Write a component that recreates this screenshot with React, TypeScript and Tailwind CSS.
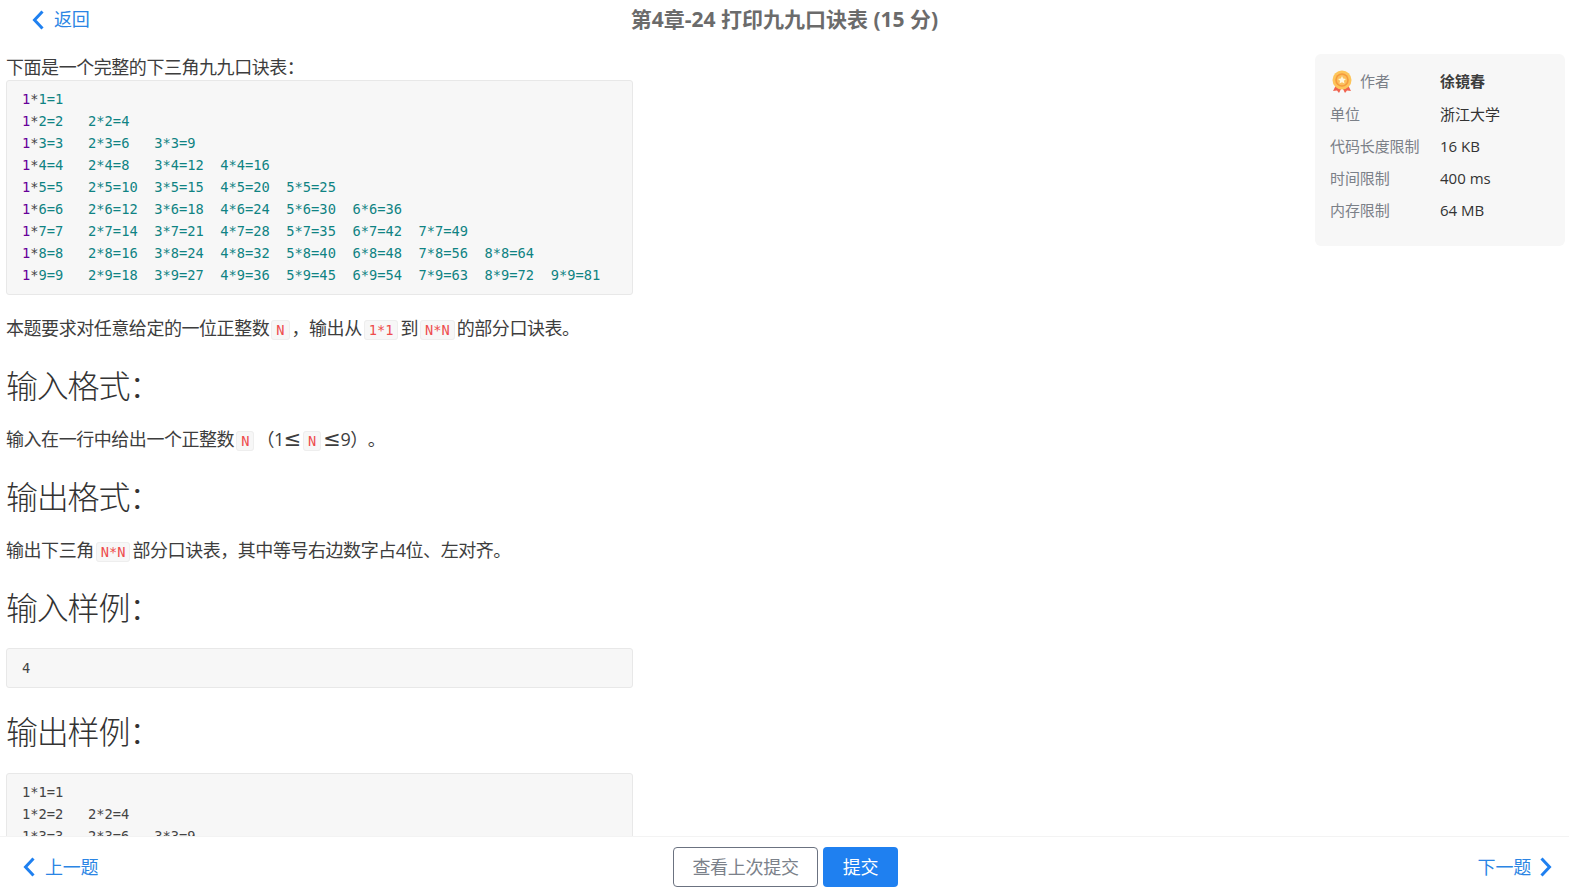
const cjk = "font-['Open_Sans','Noto_Sans_CJK_SC',sans-serif]";

const table: string[][] = [];
for (let r = 1; r <= 9; r++) {
  const row: string[] = [];
  for (let c = 1; c <= r; c++) row.push(`${c}*${r}=${c * r}`.padEnd(8, " "));
  table.push(row);
}

function Back() {
  return (
    <svg width="12" height="20" viewBox="0 0 12 20" fill="none" stroke="#1f80f0" strokeWidth="3" className="shrink-0">
      <path d="M10.5 1.5 2.5 10l8 8.5" />
    </svg>
  );
}

function Next() {
  return (
    <svg width="12" height="20" viewBox="0 0 12 20" fill="none" stroke="#1f80f0" strokeWidth="3" className="shrink-0">
      <path d="M1.5 1.5 9.5 10l-8 8.5" />
    </svg>
  );
}

function Code({ children }: { children: React.ReactNode }) {
  return (
    <code className="mx-[2px] rounded-[3px] border border-[#eeeeee] bg-[#f7f7f7] px-[4px] py-[1px] font-['DejaVu_Sans_Mono',monospace] text-[13.7px] leading-[16px] tracking-normal text-[#ee4c4c]">
      {children}
    </code>
  );
}

function Heading({ children }: { children: React.ReactNode }) {
  return <h2 className="mt-[22.5px] mb-[19.5px] text-[32px] leading-[42px] font-light tracking-[-1.2px] text-[#333333]">{children}</h2>;
}

function Pre({ children, className }: { children: React.ReactNode; className?: string }) {
  return (
    <pre className={`rounded-[3px] border border-[#e8e8e8] bg-[#f7f7f7] px-[15px] pt-[7px] pb-[8px] font-['DejaVu_Sans_Mono',monospace] text-[13.72px] leading-[22px] tracking-normal text-[#444444] ${className ?? ""}`}>
      {children}
    </pre>
  );
}

function InfoRow({ label, value }: { label: string; value: string }) {
  return (
    <div className="flex h-[32px] items-center text-[15px]">
      <span className="w-[110px] tracking-[-0.1px] text-[#7b8088]">{label}</span>
      <span className="text-[#333333]">{value}</span>
    </div>
  );
}

function Medal() {
  return (
    <svg width="22" height="24" viewBox="0 0 22 24" className="mr-[7px] ml-[1px]">
      <path d="M5 15 2 21l4-.5L8 23l3-6zM17 15l3 6-4-.5-2 2.5-3-6z" fill="#f0634f" />
      <circle cx="11" cy="10" r="9.5" fill="#fdc55a" />
      <circle cx="11" cy="10" r="6.8" fill="#f59a3e" />
      <circle cx="11" cy="10" r="5.2" fill="#fbbf5b" />
      <path d="m11 6 1.2 2.6 2.8.3-2.1 1.9.6 2.8L11 12.2l-2.5 1.4.6-2.8L7 8.9l2.8-.3z" fill="#fff6dc" />
    </svg>
  );
}

function Le() {
  return <span className="font-['DejaVu_Sans',sans-serif] text-[21px] leading-none">≤</span>;
}

export default function App() {
  return (
    <div className={`flex h-screen flex-col overflow-hidden bg-white text-[#3d3d3d] ${cjk}`}>
      <main className="min-h-0 flex-1 overflow-hidden">
        <header className="relative flex h-[40px] items-center justify-center">
          <a className="absolute top-[6px] left-[32px] flex items-center text-[18px] tracking-[-0.2px] text-[#2b85e4]">
            <Back />
            <span className="ml-[10px]">返回</span>
          </a>
          <h1 className="text-[21px] font-bold text-[#6b6b6b]">第4章-24 打印九九口诀表 (15 分)</h1>
        </header>

        <div className="flex items-start justify-between pr-[4px] pl-[6px]">
          <article className="w-[627px] text-[18px] leading-[27px] tracking-[-0.45px] [text-spacing-trim:space-all]">
            <p className="mt-[14px] h-[26px]">下面是一个完整的下三角九九口诀表：</p>
            <Pre>
              {table.map((row, i) => (
                <div key={i} className="h-[22px] whitespace-pre text-[#0f8383]">
                  {row.map((cell, j) =>
                    j === 0 ? (
                      <span key={j}>
                        <span className="text-[#660099]">1</span>
                        <span className="text-[#444444]">*</span>
                        {cell.slice(2)}
                      </span>
                    ) : (
                      <span key={j}>{cell}</span>
                    ),
                  )}
                </div>
              ))}
            </Pre>

            <p className="mt-[20px]">
              本题要求对任意给定的一位正整数<Code>N</Code>，输出从<Code>1*1</Code>到<Code>N*N</Code>的部分口诀表。
            </p>

            <Heading>输入格式：</Heading>
            <p className="h-[27px]">
              输入在一行中给出一个正整数<Code>N</Code>（1<Le /><Code>N</Code><Le />9）。
            </p>

            <Heading>输出格式：</Heading>
            <p>
              输出下三角<Code>N*N</Code>部分口诀表，其中等号右边数字占4位、左对齐。
            </p>

            <Heading>输入样例：</Heading>
            <Pre className="h-[40px] pt-[8px]">4</Pre>

            <Heading>输出样例：</Heading>
            <Pre className="mt-[20.5px]">
              {"1*1=1\n1*2=2   2*2=4\n1*3=3   2*3=6   3*3=9"}
            </Pre>
          </article>

          <aside className="mt-[14px] h-[192px] w-[250px] rounded-[6px] bg-[#f7f7f7] px-[15px] pt-[11px]">
            <div className="flex h-[33px] items-center text-[15px]">
              <span className="flex w-[110px] items-center text-[#7b8088]">
                <Medal />
                作者
              </span>
              <span className="font-bold text-[#3d3d3d]">徐镜春</span>
            </div>
            <InfoRow label="单位" value="浙江大学" />
            <InfoRow label="代码长度限制" value="16 KB" />
            <InfoRow label="时间限制" value="400 ms" />
            <InfoRow label="内存限制" value="64 MB" />
          </aside>
        </div>
      </main>

      <footer className="flex h-[55px] shrink-0 items-start justify-between border-t border-[#f3f3f3] bg-white pt-[10px] pr-[17px] pl-[19px] text-[18px] tracking-[-0.2px] text-[#2b85e4]">
        <a className="flex h-[40px] w-[200px] items-center pl-[4px]">
          <Back />
          <span className="ml-[10px]">上一题</span>
        </a>
        <div className="flex gap-[5px]">
          <button className="h-[40px] w-[145px] rounded-[4px] border border-[#6b7280] tracking-[-0.3px] text-[#7b818a]">查看上次提交</button>
          <button className="h-[40px] w-[75px] rounded-[4px] bg-[#1f80f0] text-white">提交</button>
        </div>
        <a className="flex h-[40px] w-[200px] items-center justify-end">
          <span className="mr-[9px]">下一题</span>
          <Next />
        </a>
      </footer>
    </div>
  );
}
